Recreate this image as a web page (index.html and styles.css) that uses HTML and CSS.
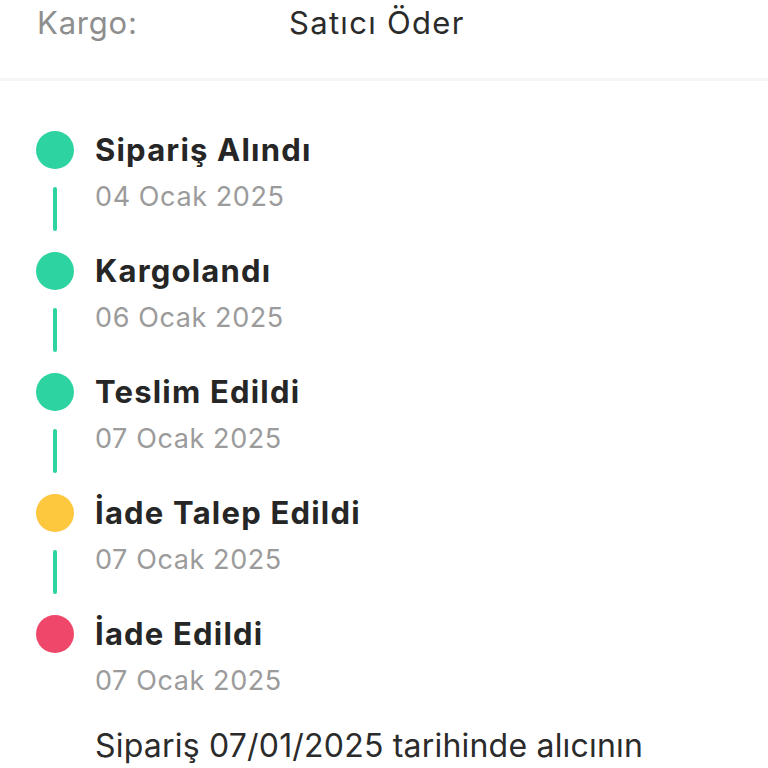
FILE: index.html
```html
<!DOCTYPE html>
<html lang="tr">
<head>
  <meta charset="UTF-8">
  <meta name="viewport" content="width=device-width, initial-scale=1.0">
  <title>Sipariş Durumu</title>
  <link rel="stylesheet" href="styles.css">
</head>
<body>
<div class="page">
  <div class="info-row">
    <span class="info-label">Kargo:</span>
    <span class="info-value">Satıcı Öder</span>
  </div>

  <div class="timeline">
    <div class="step">
      <span class="dot green"></span>
      <span class="step-title">Sipariş Alındı</span>
      <span class="connector"></span>
      <span class="step-date">04 Ocak 2025</span>
    </div>
    <div class="step">
      <span class="dot green"></span>
      <span class="step-title">Kargolandı</span>
      <span class="connector"></span>
      <span class="step-date">06 Ocak 2025</span>
    </div>
    <div class="step">
      <span class="dot green"></span>
      <span class="step-title">Teslim Edildi</span>
      <span class="connector"></span>
      <span class="step-date">07 Ocak 2025</span>
    </div>
    <div class="step">
      <span class="dot yellow"></span>
      <span class="step-title">İade Talep Edildi</span>
      <span class="connector"></span>
      <span class="step-date">07 Ocak 2025</span>
    </div>
    <div class="step last">
      <span class="dot red"></span>
      <span class="step-title">İade Edildi</span>
      <span class="connector"></span>
      <span class="step-date">07 Ocak 2025</span>
    </div>
  </div>

  <p class="note">Sipariş 07/01/2025 tarihinde alıcının</p>
</div>
</body>
</html>
```

FILE: styles.css
```css
/* General Reset */
* {
  margin: 0;
  padding: 0;
  box-sizing: border-box;
}

body, html {
  background: #ffffff;
  font-family: 'Inter', 'Liberation Sans', sans-serif;
  color: #2b2b2b;
  overflow: hidden;
}

.page {
  width: 768px;
  height: 768px;
}

/* Kargo row */
.info-row {
  display: flex;
  height: 81px;
  padding-left: 37px;
  border-bottom: 3px solid #f5f5f5;
  font-size: 31px;
  line-height: 46px;
  letter-spacing: 0.8px;
}

.info-label {
  width: 252px;
  color: #8e8e8e;
}

.info-value {
  color: #2b2b2b;
  letter-spacing: 1.3px;
}

/* Timeline */
.timeline {
  padding: 50px 0 0 36px;
}

.step {
  display: grid;
  grid-template-columns: 38px 1fr;
  grid-template-rows: 38px 56px;
  column-gap: 21px;
  height: 121px;
}

.step.last {
  height: 94px;
}

.dot {
  width: 38px;
  height: 38px;
  border-radius: 50%;
}

.dot.green {
  background: #2dd3a0;
}

.dot.yellow {
  background: #fdc83e;
}

.dot.red {
  background: #ee4769;
}

.step-title {
  font-size: 31px;
  font-weight: 700;
  line-height: 38px;
  letter-spacing: 1.2px;
  color: #262626;
}

.connector {
  justify-self: center;
  width: 4px;
  height: 44px;
  margin-top: 18px;
  border-radius: 2px;
  background: #2dd3a0;
}

.step.last .connector {
  visibility: hidden;
}

.step-date {
  font-size: 27px;
  line-height: 56px;
  letter-spacing: 0.6px;
  color: #9b9b9b;
}

.note {
  margin-top: 17px;
  padding-left: 95px;
  font-size: 32px;
  line-height: 40px;
  letter-spacing: 0.2px;
  color: #2b2b2b;
}
```
